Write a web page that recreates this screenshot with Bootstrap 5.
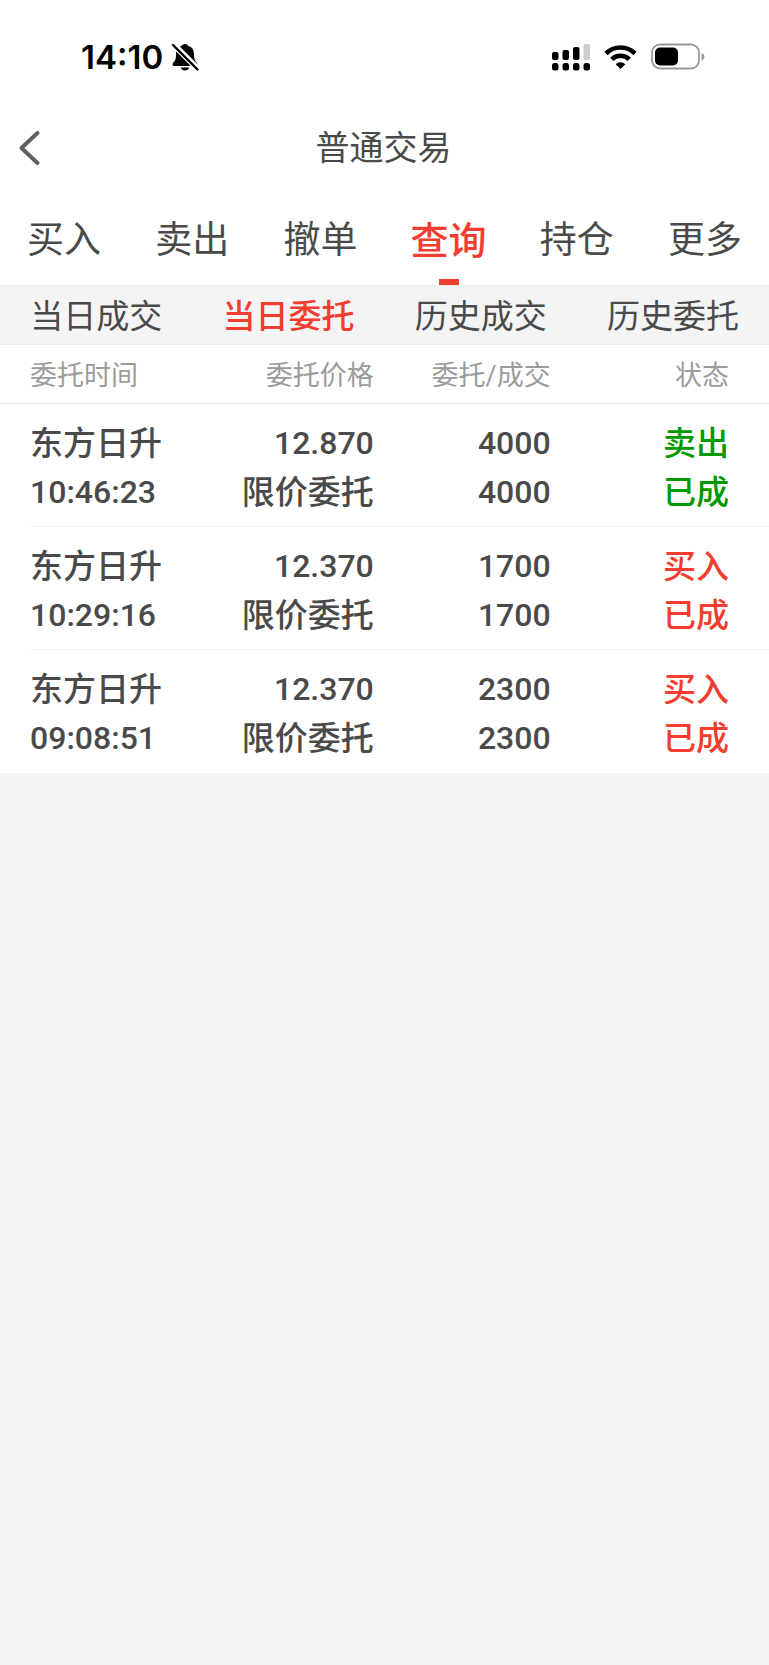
<!DOCTYPE html>
<html lang="zh-CN">
<head>
<meta charset="utf-8">
<meta name="viewport" content="width=device-width, initial-scale=1">
<title>普通交易</title>
<link href="https://cdn.jsdelivr.net/npm/bootstrap@5.3.0/dist/css/bootstrap.min.css" rel="stylesheet">
<style>
:root { --ink: #4a4a4a; --accent: #f23d30; --sell: #009900; --line: #ececec; --line-soft: #f2f2f2; --gray-bg: #f4f4f4; }
body { font-family: Roboto, "Noto Sans CJK SC", sans-serif; color: var(--ink); background: var(--gray-bg); }
.status-bar { height: 103px; padding: 11px 64px 0 81px; color: #000; }
.clock { font: 600 33px/40px Inter, sans-serif; }
.title-bar { height: 90px; padding: 0 18px 0 16px; }
.title-bar h1 { font-size: 34px; line-height: 48px; font-weight: 400; }
.title-bar .side { width: 32px; }
.main-tabs .nav-link { position: relative; height: 92px; padding: 0; font-size: 37px; line-height: 96px; color: var(--ink); }
.main-tabs .nav-link.active { font-size: 38px; font-weight: 500; color: var(--accent); }
.main-tabs .nav-link.active::after { content: ""; position: absolute; left: 50%; bottom: 0; width: 20px; height: 6px; margin-left: -10px; background: var(--accent); }
.sub-tabs { background: var(--gray-bg); border-top: 1px solid var(--line); border-bottom: 1px solid var(--line); }
.sub-tabs .nav-link { padding: 4px 0 0; font-size: 33px; line-height: 54px; color: var(--ink); }
.sub-tabs .nav-link.active { font-weight: 500; color: var(--accent); }
.orders { --bs-table-bg: transparent; table-layout: fixed; color: var(--ink); }
.orders th, .orders td { padding: 0 3px 0 0; text-align: right; white-space: nowrap; }
.orders th:first-child, .orders td:first-child { padding-left: 30px; text-align: left; }
.orders th:last-child, .orders td:last-child { padding-right: 40px; }
.orders thead th { padding-top: 4px; font-size: 27px; line-height: 54px; font-weight: 400; color: #9b9b9b; }
.orders thead tr { border-bottom: 1px solid var(--line); }
.orders tbody td { padding-top: 15px; padding-bottom: 9px; font-size: 33px; line-height: 49px; font-weight: 500; color: inherit; border-bottom: 1px solid transparent; }
.orders tbody tr:not(:last-child) { background: linear-gradient(var(--line-soft), var(--line-soft)) no-repeat 30px 100% / 100% 1px; }
.orders tbody td div { height: 49px; }
.orders .num { font-size: 32px; }
.orders tbody td.sell { color: var(--sell); }
.orders tbody td.buy { color: var(--accent); }
.status-icons { gap: 14px; }
</style>
</head>
<body>
<div class="bg-white">
  <div class="status-bar d-flex align-items-center justify-content-between">
    <div class="d-flex align-items-center gap-2">
      <span class="clock">14:10</span>
      <svg width="28" height="28" viewBox="0 0 28 28" aria-hidden="true">
        <path d="M14 1c-2 0-3 1-3.300 2C6 4 5 8 5 12c0 4-1 6-3 8-1 1-.5 3 1 3h22c1.500 0 2-2 1-3-2-2-3-4-3-8 0-4-1-8-5.700-9C17 2 16 1 14 1zM9.800 24.500h8.400c-.7 2-2 3-4.200 3s-3.500-1-4.200-3z"/>
        <path d="M2 1L27 26" stroke="#fff" stroke-width="6"/>
        <path d="M2 2L26.500 26.500" stroke="#000" stroke-width="2.400" stroke-linecap="round"/>
      </svg>
    </div>
    <div class="status-icons d-flex align-items-center">
      <svg width="38" height="28" viewBox="0 0 38 28" aria-hidden="true">
        <rect x="0" y="9" width="6.500" height="8" rx="2"/><rect x="10.500" y="7" width="6.500" height="10" rx="2"/><rect x="21" y="4" width="6.500" height="13" rx="2"/><rect x="31.500" y="1" width="6.500" height="16" rx="2" fill="#ccc"/>
        <rect x="0" y="20" width="6.500" height="7.500" rx="2.500"/><rect x="10.500" y="20" width="6.500" height="7.500" rx="2.500"/><rect x="21" y="20" width="6.500" height="7.500" rx="2.500"/><rect x="31.500" y="20" width="6.500" height="7.500" rx="2.500"/>
      </svg>
      <svg width="33" height="26" viewBox="0 0 32 26" aria-hidden="true">
        <g fill="none" stroke="#000" stroke-width="4.600"><path d="M1.500 9.500a20.500 20.500 0 0 1 29 0"/><path d="M7.300 15.300a12.500 12.500 0 0 1 17.400 0"/></g>
        <path d="M16 25l-4.800-4.800a7 7 0 0 1 9.600 0z"/>
      </svg>
      <svg width="54" height="28" viewBox="0 0 54 28" aria-hidden="true">
        <rect x="1" y="1.500" width="47" height="24" rx="8" fill="none" stroke="#999" stroke-width="1.800"/>
        <rect x="4" y="4.500" width="23" height="18" rx="5"/>
        <path d="M50.500 10c4 1.500 4 6 0 7.500z" fill="#999"/>
      </svg>
    </div>
  </div>

  <header class="title-bar d-flex align-items-center justify-content-between">
    <button type="button" class="side btn border-0 p-0 d-flex" aria-label="返回">
      <svg width="28" height="38" viewBox="0 0 28 38" fill="none" stroke="#606060" stroke-width="4" stroke-linecap="round" stroke-linejoin="round"><path d="M21.500 4L5.500 19l16 15"/></svg>
    </button>
    <h1 class="m-0">普通交易</h1>
    <span class="side"></span>
  </header>

  <nav class="main-tabs nav nav-justified flex-nowrap" aria-label="交易">
    <a class="nav-link" href="#buy">买入</a>
    <a class="nav-link" href="#sell">卖出</a>
    <a class="nav-link" href="#cancel">撤单</a>
    <a class="nav-link active" href="#query" aria-current="page">查询</a>
    <a class="nav-link" href="#hold">持仓</a>
    <a class="nav-link" href="#more">更多</a>
  </nav>

  <nav class="sub-tabs nav nav-justified flex-nowrap" aria-label="查询">
    <a class="nav-link" href="#today-deals">当日成交</a>
    <a class="nav-link active" href="#today-orders" aria-current="page">当日委托</a>
    <a class="nav-link" href="#past-deals">历史成交</a>
    <a class="nav-link" href="#past-orders">历史委托</a>
  </nav>

  <table class="orders table table-borderless m-0">
    <colgroup><col style="width:28%"><col style="width:21%"><col style="width:23%"><col style="width:28%"></colgroup>
    <thead>
      <tr><th scope="col">委托时间</th><th scope="col">委托价格</th><th scope="col">委托/成交</th><th scope="col">状态</th></tr>
    </thead>
    <tbody>
      <tr>
        <td><div>东方日升</div><div class="num">10:46:23</div></td>
        <td><div class="num">12.870</div><div>限价委托</div></td>
        <td><div class="num">4000</div><div class="num">4000</div></td>
        <td class="sell"><div>卖出</div><div>已成</div></td>
      </tr>
      <tr>
        <td><div>东方日升</div><div class="num">10:29:16</div></td>
        <td><div class="num">12.370</div><div>限价委托</div></td>
        <td><div class="num">1700</div><div class="num">1700</div></td>
        <td class="buy"><div>买入</div><div>已成</div></td>
      </tr>
      <tr>
        <td><div>东方日升</div><div class="num">09:08:51</div></td>
        <td><div class="num">12.370</div><div>限价委托</div></td>
        <td><div class="num">2300</div><div class="num">2300</div></td>
        <td class="buy"><div>买入</div><div>已成</div></td>
      </tr>
    </tbody>
  </table>
</div>
<script src="https://cdn.jsdelivr.net/npm/bootstrap@5.3.0/dist/js/bootstrap.bundle.min.js"></script>
</body>
</html>
